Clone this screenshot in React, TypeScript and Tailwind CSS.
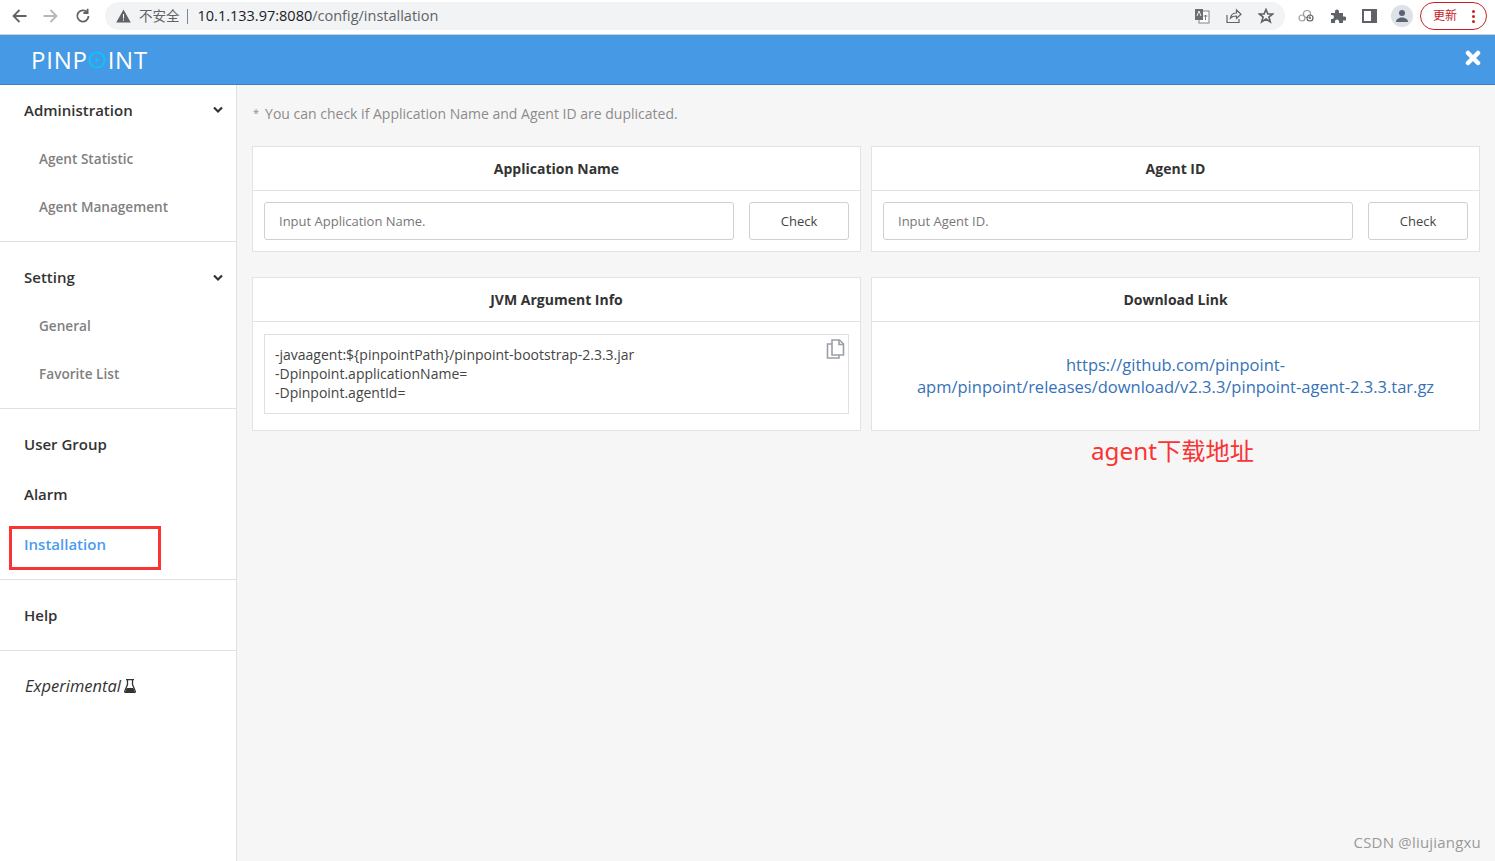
import React from "react";

const font = { fontFamily: '"Open Sans", "Noto Sans CJK SC", sans-serif' };

function SubItem({ children }: { children: React.ReactNode }) {
  return <div className="h-12 pl-[39px] flex items-center text-[13.600px] font-semibold text-[#7f7f7f]">{children}</div>;
}

function Chevron() {
  return (
    <svg width="10" height="8" viewBox="0 0 10 8" className="mr-[13px]">
      <path d="M1 1.500 L5 5.500 L9 1.500" fill="none" stroke="#333" strokeWidth="2.200" />
    </svg>
  );
}

function Top({ children, className = "" }: { children: React.ReactNode; className?: string }) {
  return <div className={`pl-6 flex items-center text-[15px] font-semibold text-[#333] ${className}`}>{children}</div>;
}

function Card({ title, children }: { title: string; children: React.ReactNode }) {
  return (
    <div className="flex-1 bg-white border border-[#e3e3e3] flex flex-col">
      <div className="h-[44px] shrink-0 border-b border-[#e3e3e3] flex items-center justify-center text-[14px] font-bold text-[#333]">{title}</div>
      {children}
    </div>
  );
}

function CheckCard({ title, placeholder }: { title: string; placeholder: string }) {
  return (
    <Card title={title}>
      <div className="h-[60px] flex items-center pl-[11px] pr-[11px] gap-[15px]">
        <div className="w-[470px] h-[38px] border border-[#d0d0d0] rounded-[3px] pl-[14px] pt-[1px] flex items-center text-[13px] text-[#777]">{placeholder}</div>
        <div className="w-[100px] h-[38px] border border-[#d0d0d0] rounded-[3px] pt-[1px] flex items-center justify-center text-[13px] text-[#444]">Check</div>
      </div>
    </Card>
  );
}

function BrowserBar() {
  return (
    <div className="h-[35px] bg-white border-b border-[#d0d0d0] pb-[2px] flex items-center relative" style={{ fontFamily: '"Liberation Sans", "Noto Sans CJK SC", sans-serif' }}>
      <div className="w-[105px] flex items-center pl-[11px] gap-[16px] shrink-0">
        <svg width="16" height="16" viewBox="0 0 16 16"><path d="M15.500 8H3M8.500 2 2.500 8l6 6" fill="none" stroke="#5f6368" strokeWidth="1.800" /></svg>
        <svg width="16" height="16" viewBox="0 0 16 16"><path d="M.5 8H13M7.500 2l6 6-6 6" fill="none" stroke="#b5b7ba" strokeWidth="1.800" /></svg>
        <svg width="16" height="16" viewBox="0 0 16 16"><path d="M13.500 8a5.600 5.600 0 1 1-1.600-4M12.600 0.800v4.200H8.400" fill="none" stroke="#5f6368" strokeWidth="1.800" /></svg>
      </div>
      <div className="w-[1180px] h-[28px] bg-[#f1f3f4] rounded-full flex items-center pl-[11px] shrink-0">
        <svg width="15" height="14" viewBox="0 0 15 14"><path d="M7.500 0.500 14.800 13.500H.2Z" fill="#5f6368" /><path d="M7 5h1v4.500H7zM7 10.500h1v1.300H7z" fill="#fff" /></svg>
        <span className="ml-[8px] pt-[2px] text-[13.500px] text-[#5f6368]">不安全</span>
        <span className="ml-[7px] w-px h-[15px] bg-[#80868b]" />
        <span className="ml-[10px] text-[14.500px] text-[#202124]" style={font}>10.1.133.97:8080<span className="text-[#5f6368]">/config/installation</span></span>
        <div className="ml-auto flex items-center gap-[16px] pr-[11px]">
          <svg width="16" height="16" viewBox="0 0 16 16"><rect x="5" y="3" width="10" height="12" fill="#fff" stroke="#80868b" /><rect x="1" y="1" width="8" height="11" fill="#6b6f74" /><path d="M3 8l2-5 2 5" stroke="#fff" fill="none" strokeWidth="0.900" /><path d="M9.500 8h4M11.500 7v5" stroke="#6b6f74" fill="none" strokeWidth="0.900" /></svg>
          <svg width="16" height="16" viewBox="0 0 16 16"><path d="M1 7v7.500h12V11M4.500 10c.5-3.500 3-5 6-5V2l4.500 4.200-4.500 4.200V8c-2.800 0-4.600.5-6 2Z" fill="none" stroke="#5f6368" strokeWidth="1.200" /></svg>
          <svg width="16" height="16" viewBox="0 0 16 16"><path d="M8 1.500 9.900 6h4.800l-3.800 3 1.400 4.800L8 11l-4.300 2.800L5.100 9 1.300 6h4.800Z" fill="none" stroke="#5f6368" strokeWidth="1.600" /></svg>
        </div>
      </div>
      <div className="flex items-center ml-[13px] gap-[16px]">
        <svg width="16" height="14" viewBox="0 0 16 14"><circle cx="9" cy="5" r="3.500" fill="none" stroke="#9a9da1" strokeWidth="1.200" /><circle cx="4" cy="9" r="3" fill="none" stroke="#9a9da1" strokeWidth="1.200" /><circle cx="12" cy="9" r="3" fill="none" stroke="#5f6368" strokeWidth="1.200" /><circle cx="12" cy="9" r="1" fill="#5f6368" /></svg>
        <svg width="16" height="16" viewBox="0 0 16 16"><path d="M1 5h4V3.500a2 2 0 0 1 4 0V5h4v3.500h1.500a2 2 0 0 1 0 4H13V15H9v-1.500a2 2 0 0 0-4 0V15H1v-4h1a2 2 0 0 0 0-4H1Z" fill="#5f6368" /></svg>
        <svg width="15" height="14" viewBox="0 0 15 14"><path d="M0 0h15v14H0Z" fill="#5f6368" /><rect x="2" y="2" width="7" height="10" fill="#fff" /></svg>
        <div className="w-[22px] h-[22px] -ml-[2px] rounded-full bg-[#dee1e6] flex items-center justify-center">
          <svg width="14" height="12" viewBox="0 0 14 12"><circle cx="7" cy="3" r="3" fill="#5a6477" /><path d="M1 12c0-3 3-4.500 6-4.500s6 1.500 6 4.500Z" fill="#5a6477" /></svg>
        </div>
        <div className="w-[67px] h-[28px] -ml-[9px] rounded-full border border-[#c5221f] flex items-center pl-[12px] text-[12px] text-[#c5221f] relative">
          更新
          <span className="absolute right-[11px] top-[7px] flex flex-col gap-[2px]">
            <span className="w-[3px] h-[3px] rounded-full bg-[#c5221f]" />
            <span className="w-[3px] h-[3px] rounded-full bg-[#c5221f]" />
            <span className="w-[3px] h-[3px] rounded-full bg-[#c5221f]" />
          </span>
        </div>
      </div>
    </div>
  );
}

export default function App() {
  return (
    <div className="w-[1495px] h-[861px] overflow-hidden flex flex-col bg-[#f6f6f6] relative" style={font}>
      <BrowserBar />
      <header className="h-[50px] bg-[#4699e4] border-b border-[#3a80c4] flex items-center justify-between pl-[31px] pr-[14px] shrink-0">
        <div className="flex items-center text-[24px] font-normal text-white tracking-[0.750px] leading-none">
          <span>PINP</span>
          <svg width="18" height="18" viewBox="0 0 18 18" className="mr-[2px] shrink-0">
            <circle cx="9" cy="9" r="7.500" fill="none" stroke="#00ccff" strokeWidth="1.700" />
            <circle cx="9" cy="9" r="1.800" fill="#00ccff" />
          </svg>
          <span>INT</span>
        </div>
        <svg width="16" height="16" viewBox="0 0 16 16" className="mb-[3px]">
          <path d="M3 3 L13 13 M13 3 L3 13" stroke="#fff" strokeWidth="4.500" strokeLinecap="round" />
        </svg>
      </header>
      <div className="flex flex-1 min-h-0">
        <aside className="w-[237px] shrink-0 bg-white border-r border-[#e1e1e1] relative">
          <div className="border-b border-[#e1e1e1] h-[157px]">
            <Top className="justify-between h-[50px]"><span>Administration</span><Chevron /></Top>
            <SubItem>Agent Statistic</SubItem>
            <SubItem>Agent Management</SubItem>
          </div>
          <div className="border-b border-[#e1e1e1] h-[167px] pt-[11px]">
            <Top className="justify-between h-[49px]"><span>Setting</span><Chevron /></Top>
            <SubItem>General</SubItem>
            <SubItem>Favorite List</SubItem>
          </div>
          <div className="border-b border-[#e1e1e1] h-[171px] pt-[11px]">
            <Top className="h-[50px] pb-[2px]">User Group</Top>
            <Top className="h-[50px] pb-[2px]">Alarm</Top>
            <Top className="h-[50px] pb-[2px] !text-[#4a9cf0]">Installation</Top>
          </div>
          <div className="border-b border-[#e1e1e1] h-[71px] pt-[10px]">
            <Top className="h-[50px]">Help</Top>
          </div>
          <div className="pt-[11px]">
            <Top className="h-[50px] pb-[2px] italic !font-medium !text-[16.500px] pl-[25px]">
              <span>Experimental</span>
              <svg width="12" height="14" viewBox="0 0 12 14" className="ml-[3px]">
                <path d="M2 .5h8M3.500 1v4.500L.8 12a1 1 0 0 0 1 1.500h8.400a1 1 0 0 0 1-1.500L8.500 5.500V1" fill="none" stroke="#333" strokeWidth="1.300" />
                <path d="M2.700 9h6.600l1.500 4H1.200Z" fill="#333" />
              </svg>
            </Top>
          </div>
          <div className="absolute left-[9px] top-[441px] w-[152px] h-[44px] border-[3px] border-[#f83434]" />
        </aside>
        <main className="flex-1 min-w-0 pl-[15px] pr-[15px]">
          <p className="h-[61px] flex items-center pb-[4px] pl-[1px] text-[14px] text-[#8c8c8c]"><span className="text-[11px] mr-[6px]">*</span>You can check if Application Name and Agent ID are duplicated.</p>
          <div className="flex gap-[10px] h-[106px]">
            <CheckCard title="Application Name" placeholder="Input Application Name." />
            <CheckCard title="Agent ID" placeholder="Input Agent ID." />
          </div>
          <div className="flex gap-[10px] h-[154px] mt-[25px]">
            <Card title="JVM Argument Info">
              <div className="px-[11px] pt-[12px]">
                <div className="h-[80px] border border-[#e0e0e0] pl-[10px] pt-[10px] text-[14px] leading-[19px] text-[#444] relative">
                  <div>-javaagent:{"${pinpointPath}"}/pinpoint-bootstrap-2.3.3.jar</div>
                  <div>-Dpinpoint.applicationName=</div>
                  <div>-Dpinpoint.agentId=</div>
                  <svg width="19" height="20" viewBox="0 0 19 20" className="absolute right-[3px] top-[4px]">
                    <path d="M6 3.500V16h11.500V5l-4-4H6Z" fill="#fff" stroke="#9aa0a8" strokeWidth="1.600" />
                    <path d="M13 1v4.500h4.500" fill="none" stroke="#9aa0a8" strokeWidth="1.600" />
                    <path d="M6 5H1.500v14H13v-3" fill="none" stroke="#9aa0a8" strokeWidth="1.600" />
                  </svg>
                </div>
              </div>
            </Card>
            <Card title="Download Link">
              <div className="flex-1 flex items-center justify-center text-center text-[16.500px] font-medium leading-[22px] text-[#3672b8]">
                <span className="whitespace-nowrap">https://github.com/pinpoint-<br />apm/pinpoint/releases/download/v2.3.3/pinpoint-agent-2.3.3.tar.gz</span>
              </div>
            </Card>
          </div>
          <div className="ml-[839px] text-[24.250px] leading-[40px] text-[#f83434] whitespace-nowrap" style={{ fontFamily: '"Noto Sans", "Noto Sans CJK SC", sans-serif' }}>agent下载地址</div>
        </main>
      </div>
      <div className="absolute right-[14px] bottom-[8px] text-[15px] text-[#9a9a9a] tracking-[0.2px]">CSDN @liujiangxu</div>
    </div>
  );
}
